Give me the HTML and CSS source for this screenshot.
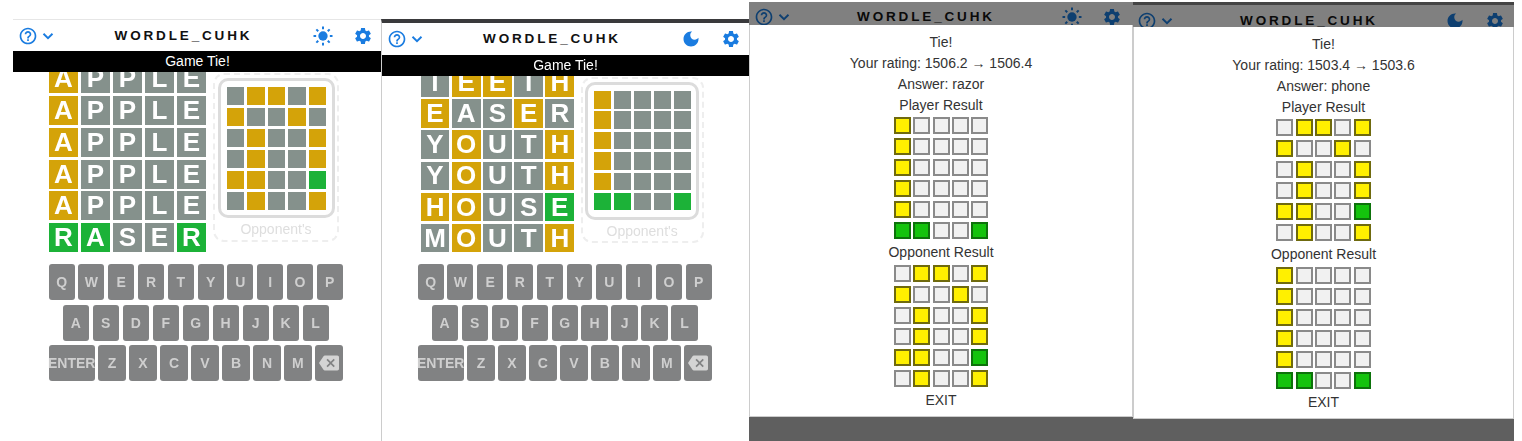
FILE: index.html
```html
<!DOCTYPE html>
<html lang="en">
<head>
<meta charset="utf-8">
<title>Wordle CUHK</title>
<link rel="stylesheet" href="styles.css">
</head>
<body>
<svg class="defs" width="0" height="0" aria-hidden="true">
  <symbol id="i-help" viewBox="0 0 24 24"><path d="M11 18h2v-2h-2v2zm1-16C6.48 2 2 6.48 2 12s4.48 10 10 10 10-4.48 10-10S17.52 2 12 2zm0 18c-4.41 0-8-3.59-8-8s3.59-8 8-8 8 3.59 8 8-3.59 8-8 8zm0-14c-2.21 0-4 1.79-4 4h2c0-1.1.9-2 2-2s2 .9 2 2c0 2-3 1.75-3 5h2c0-2.25 3-2.5 3-5 0-2.21-1.79-4-4-4z"/></symbol>
  <symbol id="i-chev" viewBox="0 0 12 12"><path d="M1.5 3.8 6 8.2l4.5-4.4" fill="none" stroke="currentColor" stroke-width="1.9"/></symbol>
  <symbol id="i-sun" viewBox="0 0 24 24"><circle cx="12" cy="12" r="5.6"/><path d="M12 .6v3.2M12 20.2v3.2M.6 12h3.2M20.2 12h3.2M4 4l2.3 2.3M17.7 17.7 20 20M4 20l2.3-2.3M17.7 6.3 20 4" fill="none" stroke="currentColor" stroke-width="2.4"/></symbol>
  <symbol id="i-moon" viewBox="0 0 24 24"><path d="M12 3c-4.97 0-9 4.03-9 9s4.03 9 9 9 9-4.03 9-9c0-.46-.04-.92-.1-1.36-.98 1.37-2.58 2.26-4.4 2.26-2.98 0-5.4-2.42-5.4-5.4 0-1.81.89-3.42 2.26-4.4-.44-.06-.9-.1-1.36-.1z"/></symbol>
  <symbol id="i-gear" viewBox="0 0 24 24"><path d="M19.14,12.94c0.04-0.3,0.06-0.61,0.06-0.94c0-0.32-0.02-0.64-0.07-0.94l2.03-1.58c0.18-0.14,0.23-0.41,0.12-0.61 l-1.92-3.32c-0.12-0.22-0.37-0.29-0.59-0.22l-2.39,0.96c-0.5-0.38-1.03-0.7-1.62-0.94L14.4,2.81c-0.04-0.24-0.24-0.41-0.48-0.41 h-3.84c-0.24,0-0.43,0.17-0.47,0.41L9.25,5.35C8.66,5.59,8.12,5.92,7.63,6.29L5.24,5.33c-0.22-0.08-0.47,0-0.59,0.22L2.74,8.87 C2.62,9.08,2.66,9.34,2.86,9.48l2.03,1.58C4.84,11.36,4.8,11.69,4.8,12s0.02,0.64,0.07,0.94l-2.03,1.58 c-0.18,0.14-0.23,0.41-0.12,0.61l1.92,3.32c0.12,0.22,0.37,0.29,0.59,0.22l2.39-0.96c0.5,0.38,1.03,0.7,1.62,0.94l0.36,2.54 c0.05,0.24,0.24,0.41,0.48,0.41h3.84c0.24,0,0.44-0.17,0.47-0.41l0.36-2.54c0.59-0.24,1.13-0.56,1.62-0.94l2.39,0.96 c0.22,0.08,0.47,0,0.59-0.22l1.92-3.32c0.12-0.22,0.07-0.47-0.12-0.61L19.14,12.94z M12,15.6c-1.98,0-3.6-1.62-3.6-3.6 s1.62-3.6,3.6-3.6s3.6,1.62,3.6,3.6S13.98,15.6,12,15.6z"/></symbol>
  <symbol id="i-back" viewBox="0 0 24 24"><path d="M22 3H7c-.69 0-1.23.35-1.59.88L0 12l5.41 8.11c.36.53.9.89 1.59.89h15c1.1 0 2-.9 2-2V5c0-1.1-.9-2-2-2zm-3 12.59L17.59 17 14 13.41 10.41 17 9 15.59 12.59 12 9 8.41 10.41 7 14 10.59 17.59 7 19 8.41 15.41 12 19 15.59z"/></symbol>
</svg>

<div class="canvas">

  <section class="win game p1">
    <header class="bar">
      <div class="bar-left"><svg class="ic"><use href="#i-help"/></svg><svg class="chev"><use href="#i-chev"/></svg></div>
      <h1 class="title">WORDLE_CUHK</h1>
      <div class="bar-right"><svg class="ic"><use href="#i-sun"/></svg><svg class="ic"><use href="#i-gear"/></svg></div>
    </header>
    <div class="toast">Game Tie!</div>
    <main class="play">
      <div class="board">
        <div class="t y">A</div><div class="t n">P</div><div class="t n">P</div><div class="t n">L</div><div class="t n">E</div>
        <div class="t y">A</div><div class="t n">P</div><div class="t n">P</div><div class="t n">L</div><div class="t n">E</div>
        <div class="t y">A</div><div class="t n">P</div><div class="t n">P</div><div class="t n">L</div><div class="t n">E</div>
        <div class="t y">A</div><div class="t n">P</div><div class="t n">P</div><div class="t n">L</div><div class="t n">E</div>
        <div class="t y">A</div><div class="t n">P</div><div class="t n">P</div><div class="t n">L</div><div class="t n">E</div>
        <div class="t g">R</div><div class="t g">A</div><div class="t n">S</div><div class="t n">E</div><div class="t g">R</div>
      </div>
      <aside class="opp">
        <div class="frame">
          <div class="mini">
            <i class="n"></i><i class="y"></i><i class="y"></i><i class="n"></i><i class="y"></i>
            <i class="y"></i><i class="n"></i><i class="n"></i><i class="y"></i><i class="n"></i>
            <i class="n"></i><i class="y"></i><i class="n"></i><i class="n"></i><i class="y"></i>
            <i class="n"></i><i class="y"></i><i class="n"></i><i class="n"></i><i class="y"></i>
            <i class="y"></i><i class="y"></i><i class="n"></i><i class="n"></i><i class="g"></i>
            <i class="n"></i><i class="y"></i><i class="n"></i><i class="n"></i><i class="y"></i>
          </div>
        </div>
        <div class="opp-label">Opponent's</div>
      </aside>
    </main>
    <div class="keys">
      <div class="krow"><span class="k">Q</span><span class="k">W</span><span class="k">E</span><span class="k">R</span><span class="k">T</span><span class="k">Y</span><span class="k">U</span><span class="k">I</span><span class="k">O</span><span class="k">P</span></div>
      <div class="krow"><span class="k">A</span><span class="k">S</span><span class="k">D</span><span class="k">F</span><span class="k">G</span><span class="k">H</span><span class="k">J</span><span class="k">K</span><span class="k">L</span></div>
      <div class="krow wide"><span class="k enter">ENTER</span><span class="k">Z</span><span class="k">X</span><span class="k">C</span><span class="k">V</span><span class="k">B</span><span class="k">N</span><span class="k">M</span><span class="k"><svg class="bk"><use href="#i-back"/></svg></span></div>
    </div>
  </section>

  <section class="win game p2">
    <header class="bar">
      <div class="bar-left"><svg class="ic"><use href="#i-help"/></svg><svg class="chev"><use href="#i-chev"/></svg></div>
      <h1 class="title">WORDLE_CUHK</h1>
      <div class="bar-right"><svg class="ic"><use href="#i-moon"/></svg><svg class="ic"><use href="#i-gear"/></svg></div>
    </header>
    <div class="toast">Game Tie!</div>
    <main class="play">
      <div class="board">
        <div class="t n">T</div><div class="t y">E</div><div class="t y">E</div><div class="t n">T</div><div class="t y">H</div>
        <div class="t y">E</div><div class="t n">A</div><div class="t n">S</div><div class="t y">E</div><div class="t n">R</div>
        <div class="t n">Y</div><div class="t y">O</div><div class="t n">U</div><div class="t n">T</div><div class="t y">H</div>
        <div class="t n">Y</div><div class="t y">O</div><div class="t n">U</div><div class="t n">T</div><div class="t y">H</div>
        <div class="t y">H</div><div class="t y">O</div><div class="t n">U</div><div class="t n">S</div><div class="t g">E</div>
        <div class="t n">M</div><div class="t y">O</div><div class="t n">U</div><div class="t n">T</div><div class="t y">H</div>
      </div>
      <aside class="opp">
        <div class="frame">
          <div class="mini">
            <i class="y"></i><i class="n"></i><i class="n"></i><i class="n"></i><i class="n"></i>
            <i class="y"></i><i class="n"></i><i class="n"></i><i class="n"></i><i class="n"></i>
            <i class="y"></i><i class="n"></i><i class="n"></i><i class="n"></i><i class="n"></i>
            <i class="y"></i><i class="n"></i><i class="n"></i><i class="n"></i><i class="n"></i>
            <i class="y"></i><i class="n"></i><i class="n"></i><i class="n"></i><i class="n"></i>
            <i class="g"></i><i class="g"></i><i class="n"></i><i class="n"></i><i class="g"></i>
          </div>
        </div>
        <div class="opp-label">Opponent's</div>
      </aside>
    </main>
    <div class="keys">
      <div class="krow"><span class="k">Q</span><span class="k">W</span><span class="k">E</span><span class="k">R</span><span class="k">T</span><span class="k">Y</span><span class="k">U</span><span class="k">I</span><span class="k">O</span><span class="k">P</span></div>
      <div class="krow"><span class="k">A</span><span class="k">S</span><span class="k">D</span><span class="k">F</span><span class="k">G</span><span class="k">H</span><span class="k">J</span><span class="k">K</span><span class="k">L</span></div>
      <div class="krow wide"><span class="k enter">ENTER</span><span class="k">Z</span><span class="k">X</span><span class="k">C</span><span class="k">V</span><span class="k">B</span><span class="k">N</span><span class="k">M</span><span class="k"><svg class="bk"><use href="#i-back"/></svg></span></div>
    </div>
  </section>

  <section class="win result p3">
    <div class="dimhead">
      <header class="bar">
        <div class="bar-left"><svg class="ic"><use href="#i-help"/></svg><svg class="chev"><use href="#i-chev"/></svg></div>
        <h1 class="title">WORDLE_CUHK</h1>
        <div class="bar-right"><svg class="ic"><use href="#i-sun"/></svg><svg class="ic"><use href="#i-gear"/></svg></div>
      </header>
    </div>
    <div class="modal">
      <p class="line">Tie!</p>
      <p class="line">Your rating: 1506.2 → 1506.4</p>
      <p class="line">Answer: razor</p>
      <p class="line">Player Result</p>
      <div class="cells">
        <b class="y"></b><b></b><b></b><b></b><b></b>
        <b class="y"></b><b></b><b></b><b></b><b></b>
        <b class="y"></b><b></b><b></b><b></b><b></b>
        <b class="y"></b><b></b><b></b><b></b><b></b>
        <b class="y"></b><b></b><b></b><b></b><b></b>
        <b class="g"></b><b class="g"></b><b></b><b></b><b class="g"></b>
      </div>
      <p class="line">Opponent Result</p>
      <div class="cells">
        <b></b><b class="y"></b><b class="y"></b><b></b><b class="y"></b>
        <b class="y"></b><b></b><b></b><b class="y"></b><b></b>
        <b></b><b class="y"></b><b></b><b></b><b class="y"></b>
        <b></b><b class="y"></b><b></b><b></b><b class="y"></b>
        <b class="y"></b><b class="y"></b><b></b><b></b><b class="g"></b>
        <b></b><b class="y"></b><b></b><b></b><b class="y"></b>
      </div>
      <p class="line">EXIT</p>
    </div>
  </section>

  <section class="win result p4">
    <div class="dimhead">
      <header class="bar">
        <div class="bar-left"><svg class="ic"><use href="#i-help"/></svg><svg class="chev"><use href="#i-chev"/></svg></div>
        <h1 class="title">WORDLE_CUHK</h1>
        <div class="bar-right"><svg class="ic"><use href="#i-moon"/></svg><svg class="ic"><use href="#i-gear"/></svg></div>
      </header>
    </div>
    <div class="modal">
      <p class="line">Tie!</p>
      <p class="line">Your rating: 1503.4 → 1503.6</p>
      <p class="line">Answer: phone</p>
      <p class="line">Player Result</p>
      <div class="cells">
        <b></b><b class="y"></b><b class="y"></b><b></b><b class="y"></b>
        <b class="y"></b><b></b><b></b><b class="y"></b><b></b>
        <b></b><b class="y"></b><b></b><b></b><b class="y"></b>
        <b></b><b class="y"></b><b></b><b></b><b class="y"></b>
        <b class="y"></b><b class="y"></b><b></b><b></b><b class="g"></b>
        <b></b><b class="y"></b><b></b><b></b><b class="y"></b>
      </div>
      <p class="line">Opponent Result</p>
      <div class="cells">
        <b class="y"></b><b></b><b></b><b></b><b></b>
        <b class="y"></b><b></b><b></b><b></b><b></b>
        <b class="y"></b><b></b><b></b><b></b><b></b>
        <b class="y"></b><b></b><b></b><b></b><b></b>
        <b class="y"></b><b></b><b></b><b></b><b></b>
        <b class="g"></b><b class="g"></b><b></b><b></b><b class="g"></b>
      </div>
      <p class="line">EXIT</p>
    </div>
  </section>

</div>
</body>
</html>
```

FILE: styles.css
```css
* { box-sizing: border-box; }
html, body { margin: 0; padding: 0; background: #fff; overflow: hidden; }
body { font-family: "Liberation Sans", Arial, sans-serif; }
.defs { position: absolute; }

/* The four screenshots sit on a free canvas */
.canvas { position: relative; width: 1522px; height: 441px; overflow: hidden; filter: blur(.5px); }
.win { position: absolute; }

.p1 { left: 13px; top: 19px; width: 369px; height: 422px; border-top: 1px solid #e6e6e6;
  --bar-h: 31px; --pl: 5px; --pr: 9px; --kl: 35.7px;
  --tw: 29px; --th: 29px; --cg: 3px; --rg: 2.8px; --lift: -7.8px; --bl: 36px;
  --og: 7px; --ow: 126px; --oh: 169px; --ot: 1px;
  --fh: 140px; --fw: 117px; --fp: 5.7px 0 0 6px; --mw: 17.5px; --mh: 18.5px; --mcg: 3px; --mrg: 2.5px;
  --kt: 192px; }
.p2 { left: 381px; top: 19px; width: 368px; height: 422px; border-top: 4px solid #3a3a3c; border-left: 1px solid #ccc;
  --bar-h: 32px; --pl: 5px; --pr: 8px; --kl: 35.6px;
  --tw: 28.7px; --th: 28.5px; --cg: 2.5px; --rg: 2.7px; --lift: -8px; --bl: 38.7px;
  --og: 6.5px; --ow: 123px; --oh: 166px; --ot: 1px;
  --fh: 138px; --fw: 114px; --fp: 6px 0 0 5.5px; --mw: 17px; --mh: 17.5px; --mcg: 3px; --mrg: 2.9px;
  --kt: 188px; }

/* Game header */
.bar { display: flex; align-items: center; justify-content: space-between; height: var(--bar-h, 32px);
  padding: 0 var(--pr, 9px) 0 var(--pl, 5px); background: #fff; color: #1976d2; }
.bar-left { display: flex; align-items: center; gap: 4px; }
.bar-right { display: flex; align-items: center; gap: 20px; }
.ic { width: 20px; height: 20px; fill: currentColor; color: #1a7ce0; display: block; }
.chev { width: 12px; height: 12px; color: #1a7ce0; display: block; }
.title { margin: 0; font-size: 13.5px; font-weight: 700; letter-spacing: 2.85px; color: #111; line-height: 1; }

.toast { height: 21px; line-height: 21px; text-align: center; background: #000; color: #fff; font-size: 14px; }

/* Board and opponent */
.play { display: flex; align-items: flex-start; height: var(--kt); overflow: hidden; padding-left: var(--bl); }
.board { display: grid; grid-template-columns: repeat(5, var(--tw)); grid-auto-rows: var(--th);
  column-gap: var(--cg); row-gap: var(--rg); margin-top: var(--lift); }
.t { display: flex; align-items: center; justify-content: center; color: #fff; font-size: 26px; font-weight: 700; }
.t.y, .mini .y { background: #d4a309; }
.t.n, .mini .n { background: #85918c; }
.t.g, .mini .g { background: #1cb238; }

.opp { width: var(--ow); height: var(--oh); margin: var(--ot) 0 0 var(--og); border: 2px dashed #eee; border-radius: 11px;
  display: flex; flex-direction: column; align-items: center; padding-top: 3px; }
.frame { width: var(--fw); height: var(--fh); border: 3px solid #dcdcdc; border-radius: 10px; padding: var(--fp); }
.mini { display: grid; grid-template-columns: repeat(5, var(--mw)); grid-auto-rows: var(--mh); column-gap: var(--mcg); row-gap: var(--mrg); }
.mini i { display: block; }
.opp-label { margin-top: 2px; color: #dedede; font-size: 14px; line-height: 18px; }

/* Keyboard */
.keys { width: 294px; margin-left: var(--kl); display: flex; flex-direction: column; gap: 4.5px; }
.krow { display: flex; justify-content: center; gap: 3.8px; }
.k { width: 26.2px; height: 36px; border-radius: 3px; background: #818283; color: #cfcfcf; font-size: 14px; font-weight: 700;
  display: flex; align-items: center; justify-content: center; }
.wide { gap: 3.6px; }
.wide .k { width: 27.4px; }
.wide .k.enter { width: 46px; flex: none; }
.bk { width: 20px; height: 20px; fill: #d4d4d4; flex: none; }

/* Result windows */
.result { background: #5f5f5f; }
.p3 { left: 749px; top: 2px; width: 384px; height: 439px; }
.p4 { left: 1133px; top: 2px; width: 381px; height: 439px; }
.dimhead { overflow: hidden; background: #808080; }
.p3 .dimhead { height: 23px; }
.p4 .dimhead { height: 25px; border-top: 3px solid #444; }
.dimhead .bar { background: transparent; color: #0e3f70; }
.dimhead .ic, .dimhead .chev { color: #0e3f70; }
.dimhead .title { color: #0a0a0a; }
.p3 .bar { --pl: 5px; --pr: 11px; margin-top: -1px; }
.p4 .bar { --pl: 4px; --pr: 9px; }

.modal { height: 392px; background: #fff; border-bottom: 1px solid #ccc; border-right: 1px solid #ccc; border-left: 1px solid #ccc;
  padding-top: 6.5px; text-align: center; color: #333; font-size: 14px; }
.line { margin: 0; height: 21px; line-height: 21px; }
.cells { display: grid; grid-template-columns: repeat(5, 17px); grid-auto-rows: 17px; column-gap: 2.4px; row-gap: 4px;
  justify-content: center; margin: 1.7px 0 3px; }
.cells b { display: block; background: #f1f1f1; border: 2px solid #8a8a8a; }
.cells b.y { background: #fff000; border-color: #6f6a0e; }
.cells b.g { background: #14c30d; border-color: #0d720b; }
```
